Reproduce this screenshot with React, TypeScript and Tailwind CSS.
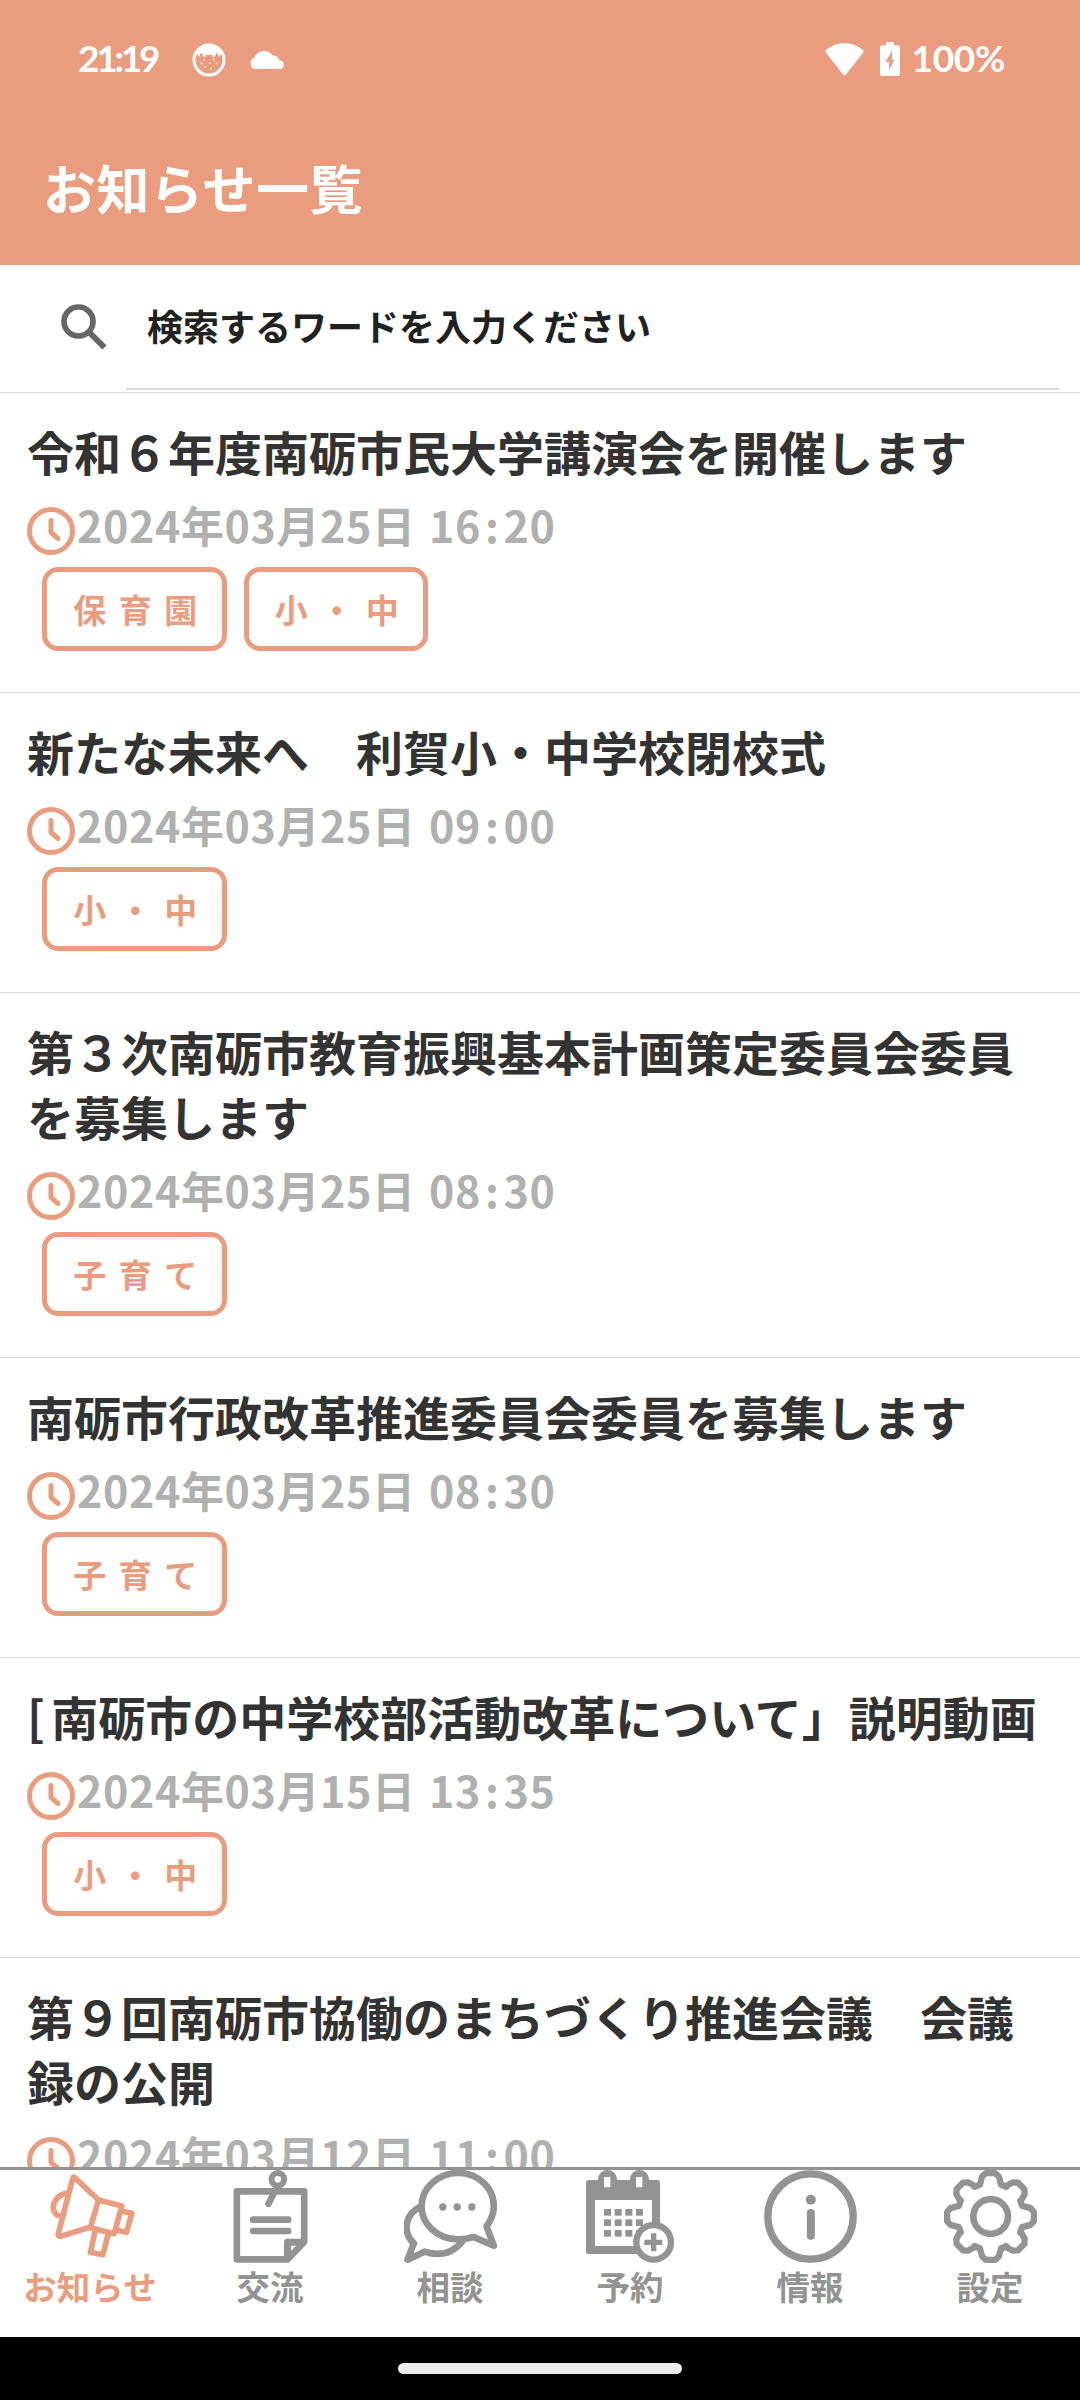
import type { ReactNode } from "react";

type News = { title: string; date: string; time: [string, string]; tags: string[] };

const NEWS: News[] = [
  { title: "令和６年度南砺市民大学講演会を開催します", date: "2024年03月25日", time: ["16", "20"], tags: ["保 育 園", "小 ・ 中"] },
  { title: "新たな未来へ　利賀小・中学校閉校式", date: "2024年03月25日", time: ["09", "00"], tags: ["小 ・ 中"] },
  { title: "第３次南砺市教育振興基本計画策定委員会委員を募集します", date: "2024年03月25日", time: ["08", "30"], tags: ["子 育 て"] },
  { title: "南砺市行政改革推進委員会委員を募集します", date: "2024年03月25日", time: ["08", "30"], tags: ["子 育 て"] },
  { title: "[南砺市の中学校部活動改革について」説明動画", date: "2024年03月15日", time: ["13", "35"], tags: ["小 ・ 中"] },
  { title: "第９回南砺市協働のまちづくり推進会議　会議録の公開", date: "2024年03月12日", time: ["11", "00"], tags: ["小 ・ 中"] },
];

function Clock() {
  return (
    <svg className="mt-[2px] size-12 shrink-0" viewBox="0 0 48 48" fill="none" stroke="#ea9d7e" strokeLinecap="round" strokeLinejoin="round">
      <circle cx="24" cy="24" r="21.5" strokeWidth="5" />
      <path d="M24 13.500V25.500L31 31.500" strokeWidth="5" />
    </svg>
  );
}

function NewsItem({ title, date, time, tags }: News) {
  return (
    <article className="flex shrink-0 flex-col border-b border-[#dcdcdc] pt-[25px] pb-[41px] pl-[27px]">
      <h2 className="w-[1040px] pr-[18px] text-[47px] leading-[65px] font-bold text-[#333]">
        {title.startsWith("[") ? <><span className="mr-[6.500px]">[</span>{title.slice(1)}</> : title}
      </h2>
      <div className="mt-[22px] flex h-[48px] items-start">
        <Clock />
        <time className="-mt-[3px] ml-[2px] text-[43px] leading-[44px] font-bold tracking-[0.600px] whitespace-pre text-[#b0b0b0] [word-spacing:3px]">
          {date} {time[0]}
          <span className="mx-[4px]">:</span>
          {time[1]}
        </time>
      </div>
      <div className="mt-[14px] ml-[15px] flex gap-[17px]">
        {tags.map((t) => (
          <span key={t} className="flex h-[84px] w-[184.500px] items-center justify-center rounded-[16px] border-[5px] border-[#ea9d7e] pl-[2px] text-[33px] leading-none font-bold whitespace-pre text-[#ea9d7e] [word-spacing:4.900px]">
            {t}
          </span>
        ))}
      </div>
    </article>
  );
}

/* Tab icons share a 279-unit square that starts at a given x. */
function TabIcon({ x, children }: { x: number; children: ReactNode }) {
  return (
    <svg className="size-[93px]" viewBox={`${x} 210 279 279`} fill="none" stroke="currentColor" strokeLinecap="round" strokeLinejoin="round">
      {children}
    </svg>
  );
}

const dotColumns = [732, 764, 796, 828];
const dotRows = [327, 358, 390];

function gearPath(cx: number, cy: number) {
  const tooth: [number, number][] = [
    [-48, -89], [-32, -95], [-25, -120], [-14, -130], [14, -130], [25, -120], [32, -95], [48, -89],
  ];
  const points: string[] = [];
  for (let i = 0; i < 8; i++) {
    const a = (i * Math.PI) / 4;
    for (const [px, py] of i % 2 ? tooth.slice(1, 7) : tooth) {
      const x = cx + px * Math.cos(a) - py * Math.sin(a);
      const y = cy + px * Math.sin(a) + py * Math.cos(a);
      points.push(`${x.toFixed(1)} ${y.toFixed(1)}`);
    }
  }
  return `M${points.join("L")}Z`;
}

const TABS: { label: string; icon: ReactNode }[] = [
  {
    label: "お知らせ",
    icon: (
      <TabIcon x={130.5}>
        <g strokeWidth="17">
          <path d="M222 232L294 300L270 381L180 409Q170 410 174 399L216 238Q218 229 222 232Z" />
          <path d="M294 300L364 318L341 401L270 383" />
          <path d="M362 333L394 340L378 397L347 390" />
          <path d="M284 392L270 457L307 464L323 403" />
          <path d="M202 280C168 280 150 318 163 338Q168 347 178 348" />
        </g>
      </TabIcon>
    ),
  },
  {
    label: "交流",
    icon: (
      <TabIcon x={670.5}>
        <path d="M709 274H911V426L861 478H709Z" strokeWidth="20" />
        <path d="M905 427H861V472" strokeWidth="21" />
        <circle cx="832" cy="238" r="19" strokeWidth="18" />
        <path d="M822 276L804 311" strokeWidth="20" />
        <path d="M758 359H863M758 393H863" strokeWidth="20" />
      </TabIcon>
    ),
  },
  {
    label: "相談",
    icon: (
      <TabIcon x={131.5}>
        <path d="M294 219C355 219 401 264 401 319Q401 350 379 379L401 437L340 411Q318 418 294 418C232 418 184 373 184 319C184 264 234 219 294 219Z" strokeWidth="20" />
        <path d="M178 322C132 345 128 400 161 430L142 479L193 455Q262 478 306 425" strokeWidth="20" />
        <g fill="currentColor" stroke="none">
          <circle cx="248" cy="321" r="11" />
          <circle cx="291" cy="321" r="11" />
          <circle cx="335" cy="321" r="11" />
        </g>
      </TabIcon>
    ),
  },
  {
    label: "予約",
    icon: (
      <TabIcon x={672}>
        <g fill="currentColor" stroke="none">
          <path fillRule="evenodd" d="M686 240H714C714 200 771 200 771 240H810C810 200 867 200 867 240H892Q900 240 900 248V454Q900 462 892 462H686Q678 462 678 454V248Q678 240 686 240ZM705 300V438H876V300ZM732 231V262H751V231ZM828 231V262H847V231Z" />
          {dotRows.map((y) => dotColumns.map((x) => <rect key={`${x}-${y}`} x={x} y={y} width="21" height="20" />))}
        </g>
        <circle cx="881" cy="427" r="52" fill="white" strokeWidth="19" />
        <path d="M881 400V454M853 427H907" strokeWidth="16" strokeLinecap="butt" />
      </TabIcon>
    ),
  },
  {
    label: "情報",
    icon: (
      <TabIcon x={129.5}>
        <circle cx="269" cy="349.500" r="128" strokeWidth="22" />
        <circle cx="270" cy="299" r="15" fill="currentColor" stroke="none" />
        <path d="M270 339V407" strokeWidth="24" />
      </TabIcon>
    ),
  },
  {
    label: "設定",
    icon: (
      <TabIcon x={672}>
        <circle cx="812" cy="349.500" r="52" strokeWidth="20" />
        <path d={gearPath(811.5, 349.5)} strokeWidth="19" />
      </TabIcon>
    ),
  },
];

export default function App() {
  return (
    <div className="flex h-[2400px] w-[1080px] flex-col overflow-hidden bg-white font-['Noto_Sans_CJK_JP',sans-serif]">
      <header className="flex h-[265px] shrink-0 flex-col bg-[#ea9d7e] text-white">
        <div className="flex h-[117px] items-center pr-[75px] pl-[78px]">
          <span className="w-[114px] pb-[2px] text-[37px] leading-none font-bold tracking-[-3.200px] font-['Lato',sans-serif]">21:19</span>
          <svg className="mt-[2px] size-[34px]" viewBox="0 0 34 34">
            <circle cx="17" cy="17" r="15" fill="none" stroke="white" strokeWidth="3" />
            <path d="M4 12Q8 2 17 2T30 12L28.500 11.500L27 14L25 9.500L22.500 14H20.500V12H13.500V14H11.500L9 9.500L7 14L5.500 11.500Z" fill="white" />
            <g fill="white" fillOpacity="0.750">
              <circle cx="12" cy="17" r="1" />
              <circle cx="21.500" cy="16.500" r="1" />
              <circle cx="9.500" cy="20.500" r="1" />
              <circle cx="18" cy="20" r="1" />
              <circle cx="24.500" cy="20.500" r="0.900" />
              <circle cx="13" cy="24" r="0.900" />
              <circle cx="19" cy="25.500" r="1" />
            </g>
          </svg>
          <svg className="ml-[23px] h-[20px] w-[36px]" viewBox="0 0 36 20" fill="white">
            <path d="M5.500 20A5.500 6 0 0 1 5.500 8.500A10.200 10.200 0 0 1 23.500 6.500A7 7 0 0 1 30.500 11.500A4.300 4.300 0 0 1 31.500 20Z" />
          </svg>
          <span className="flex-1" />
          <svg className="h-[34px] w-[39px]" viewBox="0 0 39 34" fill="white">
            <path d="M0.800 10.500Q-0.300 9.200 1.200 8Q9.500 1 19.500 1T37.800 8Q39.300 9.200 38.200 10.500L21 32.500Q19.500 34.300 18 32.500Z" />
          </svg>
          <svg className="ml-[16px] h-[34px] w-[20px]" viewBox="0 0 20 34" fill="white">
            <path fillRule="evenodd" d="M6 0H14V3.300H18Q20 3.300 20 5.300V32Q20 34 18 34H2Q0 34 0 32V5.300Q0 3.300 2 3.300H6ZM12 8.500L5.500 20H9V28.500L14.500 17.500H12Z" />
          </svg>
          <span className="ml-[11px] pb-[2px] text-[37px] leading-none font-bold tracking-[-0.300px] font-['Lato',sans-serif]">100%</span>
        </div>
        <h1 className="mt-[34px] ml-[43px] text-[53px] leading-[72px] font-bold tracking-[0.500px]">お知らせ一覧</h1>
      </header>

      <div className="flex h-[128px] shrink-0 items-start border-b border-[#dcdcdc]">
        <svg className="mt-[39px] ml-[61px] size-[46px]" viewBox="0 0 46 46" fill="none" stroke="#666">
          <circle cx="17.500" cy="17.500" r="14.500" strokeWidth="5.700" />
          <path d="M28 28L43.500 43.500" strokeWidth="6" />
        </svg>
        <div className="ml-[19px] flex h-[125px] w-[933px] items-center border-b-2 border-[#dadada] pb-[4px] pl-[21px] text-[36px] leading-none font-bold text-[#212121]">
          検索するワードを入力ください
        </div>
      </div>

      <main className="flex min-h-0 flex-1 flex-col overflow-hidden">
        {NEWS.map((n) => (
          <NewsItem key={n.title} {...n} />
        ))}
      </main>

      <nav className="grid h-[170px] shrink-0 grid-cols-6 border-t-[3px] border-[#939393] bg-white text-[#939393]">
        {TABS.map((t) => (
          <div key={t.label} className="flex flex-col items-center first:text-[#ea9d7e]">
            {t.icon}
            <span className="mt-[3px] text-[33.500px] leading-[40px] font-bold">{t.label}</span>
          </div>
        ))}
      </nav>
      <div className="flex h-[63px] shrink-0 justify-center bg-black pt-[26px]">
        <div className="h-[11px] w-[284px] rounded-full bg-[#ebebeb]" />
      </div>
    </div>
  );
}
